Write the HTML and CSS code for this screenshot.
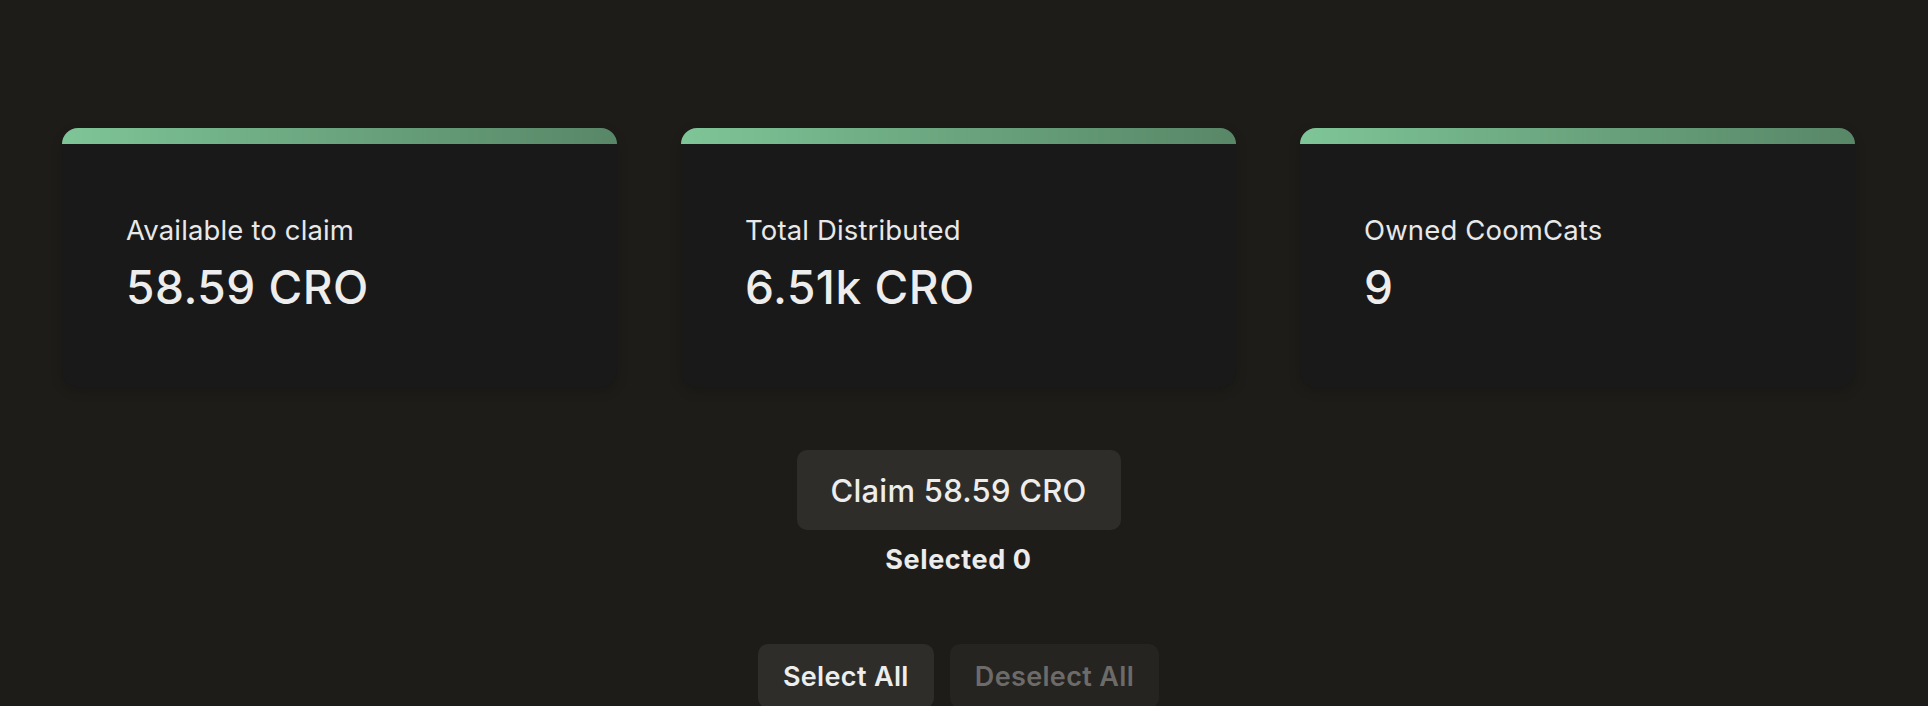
FILE: index.html
```html
<!DOCTYPE html>
<html lang="en">
<head>
<meta charset="utf-8">
<title>Claim</title>
<link rel="stylesheet" href="styles.css">
</head>
<body>
<main class="page">
  <section class="stats">
    <div class="card">
      <div class="card-bar"></div>
      <div class="card-body">
        <div class="card-label">Available to claim</div>
        <div class="card-value">58.59 CRO</div>
      </div>
    </div>
    <div class="card">
      <div class="card-bar"></div>
      <div class="card-body">
        <div class="card-label">Total Distributed</div>
        <div class="card-value">6.51k CRO</div>
      </div>
    </div>
    <div class="card">
      <div class="card-bar"></div>
      <div class="card-body">
        <div class="card-label">Owned CoomCats</div>
        <div class="card-value">9</div>
      </div>
    </div>
  </section>
  <section class="claim">
    <button class="btn btn-claim">Claim 58.59 CRO</button>
    <div class="selected">Selected 0</div>
  </section>
  <section class="select-row">
    <button class="btn btn-small">Select All</button>
    <button class="btn btn-small btn-disabled">Deselect All</button>
  </section>
</main>
</body>
</html>
```

FILE: styles.css
```css
* { box-sizing: border-box; }
html, body {
  margin: 0;
  padding: 0;
  background: #1e1c18;
  height: 100%;
  overflow: hidden;
}
body {
  font-family: Inter, "Noto Sans", sans-serif;
  color: #ececec;
}
.page {
  padding: 128px 73px 0 62px;
}
.stats {
  display: flex;
  gap: 64px;
}
.card {
  width: 555px;
  height: 259px;
  background: #191919;
  border-radius: 16px;
  overflow: hidden;
  box-shadow: 0 4px 12px rgba(0, 0, 0, 0.18);
}
.card-bar {
  height: 16px;
  background: linear-gradient(90deg, #7ec597 0%, #6aa47e 50%, #588767 100%);
}
.card-body {
  padding: 66px 64px 0 64px;
}
.card-label {
  font-size: 27.5px;
  line-height: 40px;
  font-weight: 400;
  letter-spacing: 0.15px;
  color: #e8e8e8;
}
.card-value {
  margin-top: 10px;
  font-size: 46px;
  line-height: 54px;
  font-weight: 500;
  letter-spacing: 0.5px;
  color: #ededed;
}
.claim {
  margin-top: 63px;
  display: flex;
  flex-direction: column;
  align-items: center;
}
.btn {
  font-family: Inter, "Noto Sans", sans-serif;
  border: none;
  cursor: pointer;
}
.btn-claim {
  height: 80px;
  width: 324px;
  border-radius: 10px;
  background: #2e2d2a;
  color: #ededed;
  font-size: 31px;
  font-weight: 500;
  letter-spacing: 0.25px;
}
.selected {
  margin-top: 12px;
  font-size: 27px;
  line-height: 36px;
  font-weight: 700;
  letter-spacing: 0.6px;
  color: #ececec;
}
.select-row {
  margin-top: 66px;
  display: flex;
  justify-content: center;
  gap: 16px;
}
.btn-small {
  height: 64px;
  padding: 0 25px;
  border-radius: 10px;
  background: #2e2d2a;
  color: #ededed;
  font-size: 27px;
  font-weight: 600;
  letter-spacing: 0.35px;
}
.btn-disabled {
  background: #252421;
  color: #6c6b69;
}
```
